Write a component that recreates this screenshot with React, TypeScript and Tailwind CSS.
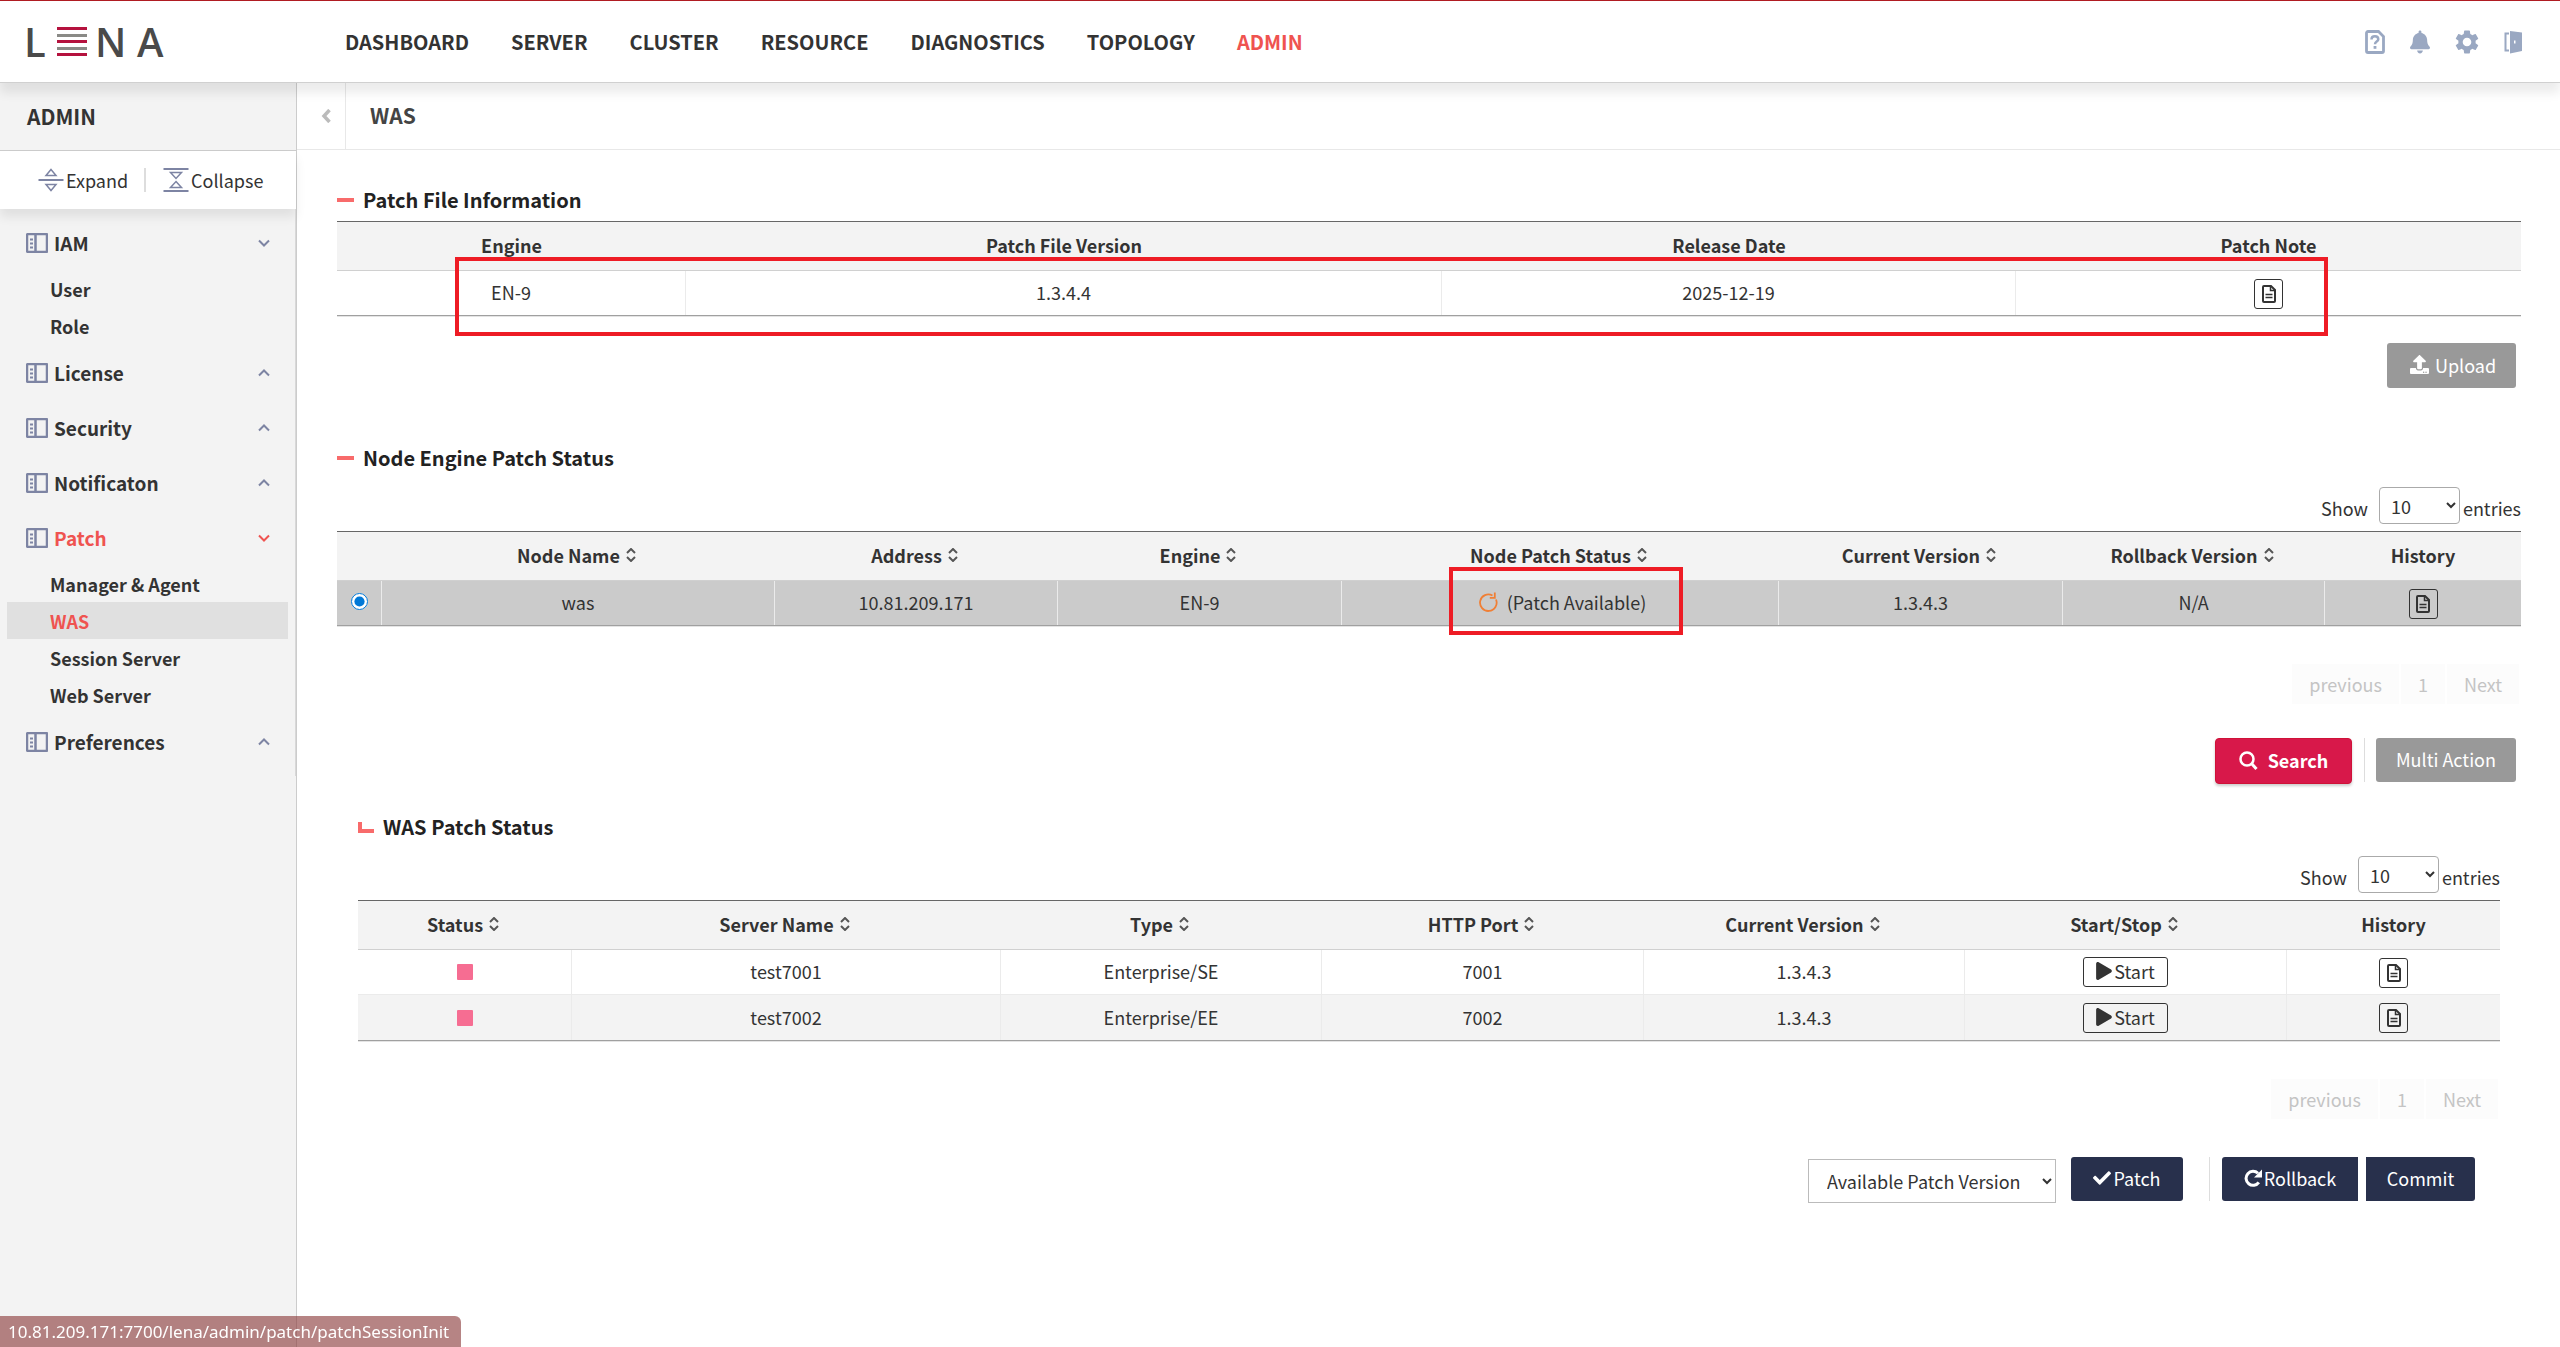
import type { ReactNode } from "react";
import { FaBell, FaCheck, FaPlay, FaUpload } from "react-icons/fa";
import { MdSettings } from "react-icons/md";

type Column = { label: string; width: string; sort?: boolean };

const NAV = ["DASHBOARD", "SERVER", "CLUSTER", "RESOURCE", "DIAGNOSTICS", "TOPOLOGY", "ADMIN"];

const MENU: { label: string; open?: boolean; active?: boolean; children?: string[] }[] = [
  { label: "IAM", open: true, children: ["User", "Role"] },
  { label: "License" },
  { label: "Security" },
  { label: "Notificaton" },
  { label: "Patch", open: true, active: true, children: ["Manager & Agent", "WAS", "Session Server", "Web Server"] },
  { label: "Preferences" },
];

const FILE_COLUMNS: Column[] = [
  { label: "Engine", width: "w-[349px]" },
  { label: "Patch File Version", width: "w-[756px]" },
  { label: "Release Date", width: "w-[574px]" },
  { label: "Patch Note", width: "w-[505px]" },
];

const NODE_COLUMNS: Column[] = [
  { label: "", width: "w-[45px]" },
  { label: "Node Name", width: "w-[393px]", sort: true },
  { label: "Address", width: "w-[283px]", sort: true },
  { label: "Engine", width: "w-[284px]", sort: true },
  { label: "Node Patch Status", width: "w-[437px]", sort: true },
  { label: "Current Version", width: "w-[284px]", sort: true },
  { label: "Rollback Version", width: "w-[262px]", sort: true },
  { label: "History", width: "w-[196px]" },
];

const SERVER_COLUMNS: Column[] = [
  { label: "Status", width: "w-[214px]", sort: true },
  { label: "Server Name", width: "w-[429px]", sort: true },
  { label: "Type", width: "w-[321px]", sort: true },
  { label: "HTTP Port", width: "w-[322px]", sort: true },
  { label: "Current Version", width: "w-[321px]", sort: true },
  { label: "Start/Stop", width: "w-[322px]", sort: true },
  { label: "History", width: "w-[213px]" },
];

const SERVERS = [
  { name: "test7001", type: "Enterprise/SE", port: "7001", version: "1.3.4.3" },
  { name: "test7002", type: "Enterprise/EE", port: "7002", version: "1.3.4.3" },
];

function Logo() {
  return (
    <a href="#home" aria-label="LENA" className="flex h-[29px] w-[318px] shrink-0 items-center pl-6 font-['Open_Sans',sans-serif] text-[40px] leading-[29px] font-semibold text-[#4a4a4a]">
      <span className="w-[33px]">L</span>
      <span className="flex h-[29px] w-[30px] flex-col justify-between">
        <span className="h-[3px] bg-[#b5123e]" />
        <span className="h-[3px] bg-[#8a8a86]" />
        <span className="h-[3px] bg-[#b5123e]" />
        <span className="h-[3px] bg-[#8a8a86]" />
        <span className="h-[3px] bg-[#b5123e]" />
      </span>
      <span className="w-[50px] pl-2">N</span>
      <span>A</span>
    </a>
  );
}

function HelpIcon() {
  return (
    <svg viewBox="0 0 20 24" className="h-6 w-5" fill="none" stroke="currentColor">
      <path d="M3 1.500h10.500l5 5V21a1.500 1.500 0 0 1-1.500 1.500H3A1.500 1.500 0 0 1 1.500 21V3A1.500 1.500 0 0 1 3 1.500Z" strokeWidth="2.800" />
      <path d="M6.500 9.400c0-2 1.300-3.200 3.400-3.200s3.400 1.200 3.400 3c0 2.400-3.300 2.300-3.300 5" strokeWidth="2.500" />
      <path d="M10 16v2.800" strokeWidth="2.800" />
    </svg>
  );
}

function DoorIcon() {
  return (
    <svg viewBox="0 0 18 24" className="h-6 w-[18px]" fill="none">
      <path d="M5 3.500H1.500v17H5" stroke="currentColor" strokeWidth="2" />
      <path d="M6 1l12 1.500v18.500L6 23.500V1Zm4 9.500v3h1.500v-3H10Z" fill="currentColor" fillRule="evenodd" />
    </svg>
  );
}

function MenuIcon() {
  return (
    <svg viewBox="0 0 22 20" className="h-5 w-[22px] text-[#7d84a3]" fill="none">
      <rect x="1" y="1" width="20" height="18" rx="1" stroke="currentColor" strokeWidth="2.500" />
      <path d="M9.500 1v18" stroke="currentColor" strokeWidth="2.500" />
      <path d="M4 6.500h3M4 10.500h3M4 14.500h3" stroke="currentColor" strokeWidth="2" />
    </svg>
  );
}

function ExpandIcon() {
  return (
    <svg viewBox="0 0 26 24" className="h-6 w-[26px]" fill="none" stroke="#7d84a3" strokeWidth="1.500">
      <path d="M0.500 12h25" strokeWidth="2" />
      <path d="M13 1.500l5 6H8l5-6ZM8 16.500h10l-5 6-5-6Z" />
    </svg>
  );
}

function CollapseIcon() {
  return (
    <svg viewBox="0 0 26 24" className="h-6 w-[26px]" fill="none" stroke="#7d84a3" strokeWidth="1.500">
      <path d="M0.500 1h25M0.500 23h25" strokeWidth="2" />
      <path d="M7.500 4.500h11l-5.500 6-5.500-6ZM13 13.500l5.500 6h-11l5.500-6Z" />
    </svg>
  );
}

function Chevron({ open }: { open?: boolean }) {
  return (
    <svg viewBox="0 0 12 8" className="h-2 w-3" fill="none" stroke="currentColor" strokeWidth="2">
      <path d={open ? "M1 1.500l5 5 5-5" : "M1 6.500l5-5 5 5"} />
    </svg>
  );
}

function SortIcon() {
  return (
    <svg viewBox="0 0 10 14" className="h-[14px] w-[10px]" fill="none" stroke="#555" strokeWidth="2">
      <path d="M1 5l4-4 4 4M1 9l4 4 4-4" />
    </svg>
  );
}

function NoteButton({ label }: { label: string }) {
  return (
    <button type="button" aria-label={label} className="inline-flex h-[30px] w-[29px] items-center justify-center rounded-[3px] border border-[#333] align-middle">
      <svg viewBox="0 0 14 18" className="h-[18px] w-[14px]" fill="none" stroke="#333">
        <path d="M1 2a1 1 0 0 1 1-1h7l4 4v11a1 1 0 0 1-1 1H2a1 1 0 0 1-1-1V2Z" strokeWidth="2" />
        <path d="M8.500 1v4.500H13" strokeWidth="1.500" />
        <path d="M3.500 9.500h7M3.500 12.500h7" strokeWidth="1.600" />
      </svg>
    </button>
  );
}

function Header() {
  return (
    <header className="relative z-20 flex h-[83px] items-center border-t border-b border-t-[#b01c22] border-b-[#d0d0d0] bg-white pr-[38px] shadow-[0_10px_10px_rgba(0,0,0,0.08)]">
      <Logo />
      <nav className="flex gap-[42px] pl-[27px] text-[20px] leading-6 font-bold">
        {NAV.map((item) => (
          <a key={item} href={`#${item.toLowerCase()}`} className={item === "ADMIN" ? "text-[#ef5350]" : "text-[#333]"}>
            {item}
          </a>
        ))}
      </nav>
      <div className="ml-auto flex items-center gap-[25px] text-[#9aa8c2]">
        <button type="button" aria-label="Help"><HelpIcon /></button>
        <button type="button" aria-label="Notifications"><FaBell className="h-6 w-5" /></button>
        <button type="button" aria-label="Settings"><MdSettings viewBox="2 2 20 20" className="size-6" /></button>
        <button type="button" aria-label="Log out"><DoorIcon /></button>
      </div>
    </header>
  );
}

function Sidebar() {
  return (
    <aside className="flex w-[297px] shrink-0 flex-col border-r border-[#ccc] bg-[#f3f3f3]">
      <h2 className="flex h-[68px] items-center border-b border-[#ccc] pb-[2px] pl-[27px] text-[21px] leading-6 font-bold">ADMIN</h2>
      <div className="flex h-[58px] items-center bg-white pl-[38px] text-[18px] leading-6 shadow-[0_8px_10px_rgba(0,0,0,0.08)]">
        <button type="button" className="flex items-center gap-[2px]"><ExpandIcon />Expand</button>
        <span className="mr-[17px] ml-4 h-6 w-[2px] bg-[#ddd]" />
        <button type="button" className="flex items-center gap-[2px]"><CollapseIcon />Collapse</button>
      </div>
      <ul className="border-r border-[#d8d8d8] pt-[6px] pb-[7px]">
        {MENU.map((group) => (
          <li key={group.label}>
            <button type="button" className={`flex h-[55px] w-full items-center gap-[6px] pr-[25px] pl-[26px] text-[19px] leading-6 font-bold ${group.active ? "text-[#ef5350]" : ""}`}>
              <MenuIcon />
              {group.label}
              <span className={`ml-auto ${group.active ? "text-[#ef5350]" : "text-[#7d84a3]"}`}><Chevron open={group.open} /></span>
            </button>
            {group.children && (
              <ul className="pb-px">
                {group.children.map((child) => (
                  <li key={child}>
                    <a
                      href={`#${child}`}
                      className={`mr-[7px] ml-[7px] flex h-[37px] items-center pl-[43px] text-[18px] leading-6 font-bold ${child === "WAS" ? "bg-[#e0e0e0] text-[#ef5350]" : ""}`}
                    >
                      {child}
                    </a>
                  </li>
                ))}
              </ul>
            )}
          </li>
        ))}
      </ul>
    </aside>
  );
}

function SectionTitle({ children, nested }: { children: ReactNode; nested?: boolean }) {
  return (
    <h2 className="flex h-[30px] items-center gap-[9px] text-[20px] leading-[30px] font-bold text-[#222]">
      {nested ? <span className="h-[11px] w-4 border-b-4 border-l-4 border-[#f86b6b]" /> : <span className="h-1 w-[17px] bg-[#f86b6b]" />}
      {children}
    </h2>
  );
}

function Table({ columns, children }: { columns: Column[]; children: ReactNode }) {
  return (
    <table className="w-full table-fixed border-separate border-spacing-0 border-t border-b border-t-[#666] border-b-[#a0a0a0] text-center text-[18px] leading-6 shadow-[0_1px_0_#e4e4e4]">
      <thead>
        <tr className="bg-[#f3f3f3]">
          {columns.map((column, index) => (
            <th key={index} scope="col" className={`h-[49px] border-b border-[#d0d0d0] pb-[3px] font-bold ${column.width}`}>
              {column.sort ? (
                <button type="button" className="inline-flex items-center gap-[6px] pr-1">{column.label}<SortIcon /></button>
              ) : (
                column.label
              )}
            </th>
          ))}
        </tr>
      </thead>
      <tbody className="[&_td]:border-r [&_td]:border-[#ebebeb] [&_td:last-child]:border-r-0">{children}</tbody>
    </table>
  );
}

function Entries({ id }: { id: string }) {
  return (
    <div className="mb-[7px] flex h-[51px] items-end justify-end text-[18px] leading-6">
      <label htmlFor={id} className="mr-[11px] mb-1">Show</label>
      <select id={id} className="mr-[3px] h-[37px] w-[81px] rounded-[4px] border border-[#aaa] bg-white pl-[7px]">
        <option>10</option>
        <option>25</option>
      </select>
      <span className="mb-1">entries</span>
    </div>
  );
}

function Pagination() {
  return (
    <nav aria-label="Pages" className="mt-[38px] mr-[2px] flex justify-end gap-[2px] text-[18px] leading-10 text-[#c4c4c4] [&>button]:h-10 [&>button]:bg-[#fcfcfc] [&>button]:px-[17px] [&>button]:pb-[2px]">
      <button type="button">previous</button>
      <button type="button">1</button>
      <button type="button">Next</button>
    </nav>
  );
}

export default function App() {
  return (
    <div className="flex min-h-screen flex-col bg-white font-['Noto_Sans_CJK_KR',sans-serif] text-[#333]">
      <Header />
      <div className="flex flex-1">
        <Sidebar />
        <main className="min-w-0 flex-1">
          <div className="flex h-[67px] items-center border-b border-[#e8e8e8]">
            <button type="button" aria-label="Hide menu" className="flex h-full w-[49px] items-center justify-center border-r border-[#e8e8e8] pl-[10px]">
              <svg viewBox="0 0 10 14" className="h-[14px] w-[10px]" fill="none" stroke="#bbb" strokeWidth="3.500"><path d="M8.500 1L3 7l5.500 6" /></svg>
            </button>
            <h1 className="pb-[2px] pl-6 text-[21px] leading-6 font-bold text-[#444]">WAS</h1>
          </div>

          <div className="pr-[39px] pl-10">
            <section className="pt-[35px]">
              <SectionTitle>Patch File Information</SectionTitle>
              <div className="relative mt-[6px]">
                <Table columns={FILE_COLUMNS}>
                  <tr>
                    <td className="h-11 pb-[2px]">EN-9</td>
                    <td className="pb-[2px]">1.3.4.4</td>
                    <td className="pb-[2px]">2025-12-19</td>
                    <td className="pt-[2px]"><NoteButton label="Patch note" /></td>
                  </tr>
                </Table>
                <div className="pointer-events-none absolute top-9 right-[193px] -bottom-5 left-[118px] border-4 border-[#ee1c25]" />
              </div>
              <div className="mt-[27px] mr-[5px] flex justify-end">
                <button type="button" className="flex h-[45px] w-[129px] items-center justify-center gap-[6px] rounded-[3px] bg-[#999] pb-[2px] pl-[3px] text-[18px] leading-6 text-white">
                  <FaUpload className="size-[19px]" />Upload
                </button>
              </div>
            </section>

            <section className="pt-[55px]">
              <SectionTitle>Node Engine Patch Status</SectionTitle>
              <Entries id="node-entries" />
              <Table columns={NODE_COLUMNS}>
                <tr className="bg-[#cbcbcb]">
                  <td className="h-11 pb-1"><input type="radio" name="node" aria-label="was" defaultChecked className="mx-auto block size-[17px] accent-[#0078d7]" /></td>
                  <td className="pb-[2px]">was</td>
                  <td className="pb-[2px]">10.81.209.171</td>
                  <td className="pb-[2px]">EN-9</td>
                  <td className="pl-1">
                    <span className="relative inline-flex items-center gap-[9px]">
                      <svg viewBox="0 0 20 20" className="size-5" fill="none" stroke="#f07f35" strokeWidth="1.800">
                        <path d="M14.500 3.500a8.300 8.300 0 1 0 3.500 4M16.800 0.500v5.300h-5" />
                      </svg>
                      (Patch Available)
                      <span className="pointer-events-none absolute -top-[23px] -right-[37px] -bottom-[21px] -left-[29px] border-4 border-[#ee1c25]" />
                    </span>
                  </td>
                  <td className="pb-[2px]">1.3.4.3</td>
                  <td className="pb-[2px]">N/A</td>
                  <td className="pt-[2px]"><NoteButton label="Node history" /></td>
                </tr>
              </Table>
              <Pagination />
              <div className="mt-[34px] mr-[5px] flex justify-end text-[18px] leading-6 text-white">
                <button type="button" className="flex h-[46px] w-[137px] items-center justify-center gap-[10px] rounded-[4px] border border-[#cf1238] bg-[#d8184a] pb-[2px] font-bold shadow-[0_2px_3px_rgba(0,0,0,0.2)]">
                  <svg viewBox="0 0 19 19" className="size-[19px]" fill="none" stroke="currentColor" strokeWidth="2.500"><circle cx="8" cy="8" r="6.500" /><path d="M12.500 12.500l5 5.500" strokeWidth="3" /></svg>
                  Search
                </button>
                <span className="mr-[11px] ml-3 h-11 w-px bg-[#ddd]" />
                <button type="button" className="h-11 w-[140px] rounded-[3px] bg-[#999] pb-[2px]">Multi Action</button>
              </div>
            </section>

            <section className="mx-[21px] pt-7">
              <SectionTitle nested>WAS Patch Status</SectionTitle>
              <Entries id="server-entries" />
              <Table columns={SERVER_COLUMNS}>
                {SERVERS.map((server, index) => (
                  <tr key={server.name} className={index === 0 ? "[&>td]:border-b" : "bg-[#f3f3f3]"}>
                    <td className="h-[45px]"><span className="mx-auto block size-4 rounded-[1px] bg-[#f66d92]" /></td>
                    <td className="pb-[2px]">{server.name}</td>
                    <td className="pb-[2px]">{server.type}</td>
                    <td className="pb-[2px]">{server.port}</td>
                    <td className="pb-[2px]">{server.version}</td>
                    <td>
                      <button type="button" className="inline-flex h-[30px] w-[85px] items-center justify-center gap-[2px] rounded-[3px] border border-[#333] pb-[2px] align-middle">
                        <FaPlay className="h-[18px] w-4" />Start
                      </button>
                    </td>
                    <td className="pt-px"><NoteButton label={`${server.name} history`} /></td>
                  </tr>
                ))}
              </Table>
              <Pagination />
              <div className="mt-[38px] mr-[25px] flex justify-end text-[18px] leading-6 text-white">
                <select aria-label="Available patch version" className="mt-[2px] mr-[15px] h-11 w-[248px] border border-[#bbb] bg-white pl-[14px] text-[#333]">
                  <option>Available Patch Version</option>
                </select>
                <button type="button" className="flex h-11 w-28 items-center justify-center gap-[2px] rounded-[3px] bg-[#28304c] pb-[2px]"><FaCheck className="size-[18px]" />Patch</button>
                <span className="mr-3 ml-[26px] h-11 w-px bg-[#ddd]" />
                <button type="button" className="mr-2 flex h-11 w-[136px] items-center justify-center gap-[2px] rounded-l-[3px] bg-[#28304c] pb-[2px]">
                  <svg viewBox="0 0 18 18" className="size-[18px]" fill="none" stroke="currentColor" strokeWidth="3">
                    <path d="M14.800 13.300A7 7 0 1 1 14 4.300" />
                    <path d="M18 0.500v8h-8l8-8Z" fill="currentColor" stroke="none" />
                  </svg>
                  Rollback
                </button>
                <button type="button" className="h-11 w-[109px] rounded-r-[3px] bg-[#28304c] pb-[2px]">Commit</button>
              </div>
            </section>
          </div>
        </main>
      </div>
      <div className="fixed bottom-0 left-0 z-30 h-[31px] rounded-tr-[6px] bg-[rgba(140,60,60,0.63)] pr-3 pl-2 font-['Noto_Sans',sans-serif] text-[17px] leading-[31px] text-white">
        10.81.209.171:7700/lena/admin/patch/patchSessionInit
      </div>
    </div>
  );
}
